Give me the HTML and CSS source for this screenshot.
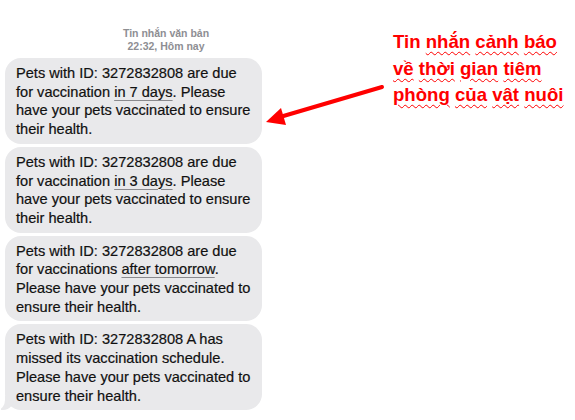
FILE: index.html
```html
<!DOCTYPE html>
<html lang="vi">
<head>
<meta charset="utf-8">
<link rel="stylesheet" href="styles.css">
</head>
<body>
<div class="page">
  <div class="chat">
    <div class="meta">
      <div>Tin nhắn văn bản</div>
      <div>22:32, Hôm nay</div>
    </div>
    <div class="bubble">Pets with ID: 3272832808 are due<br>for vaccination <span class="u">in 7 days</span>. Please<br>have your pets vaccinated to ensure<br>their health.</div>
    <div class="bubble">Pets with ID: 3272832808 are due<br>for vaccination <span class="u">in 3 days</span>. Please<br>have your pets vaccinated to ensure<br>their health.</div>
    <div class="bubble">Pets with ID: 3272832808 are due<br>for vaccinations <span class="u">after tomorrow</span>.<br>Please have your pets vaccinated to<br>ensure their health.</div>
    <div class="bubble last">Pets with ID: 3272832808 A has<br>missed its vaccination schedule.<br>Please have your pets vaccinated to<br>ensure their health.<span class="tail"></span></div>
  </div>
  <div class="note">
    <div>Tin <span class="w">nhắn</span> <span class="w">cảnh</span> <span class="w">báo</span></div>
    <div><span class="w">về</span> <span class="w">thời</span> <span class="w">gian</span> <span class="w">tiêm</span></div>
    <div><span class="w">phòng</span> <span class="w">của</span> <span class="w">vật</span> <span class="w">nuôi</span></div>
  </div>
  <svg class="arrow" width="575" height="420" viewBox="0 0 575 420">
    <line x1="382" y1="87" x2="280" y2="117" stroke="#ff0000" stroke-width="4" stroke-linecap="round"/>
    <polygon points="266,122 281,108 286,125" fill="#ff0000"/>
  </svg>
</div>
</body>
</html>
```
FILE: styles.css
```css
html, body {
  margin: 0;
  padding: 0;
  background: #ffffff;
}
.page {
  position: relative;
  width: 575px;
  height: 420px;
  display: flex;
  align-items: flex-start;
  font-family: "Liberation Sans", Arial, sans-serif;
}
.chat {
  display: flex;
  flex-direction: column;
  gap: 3px;
  padding: 27px 0 0 5px;
  width: 257px;
  flex: none;
}
.meta {
  margin-left: 56px;
  width: 210px;
  text-align: center;
  color: #8e8e93;
  font-size: 10.5px;
  font-weight: bold;
  line-height: 12.5px;
  margin-bottom: 3px;
}
.bubble {
  position: relative;
  background: #e9e9eb;
  border-radius: 16px;
  padding: 6px 0 5px 11px;
  color: #111111;
  font-size: 14.6px;
  line-height: 18.7px;
  white-space: nowrap;
  -webkit-text-stroke: 0.2px #111111;
}
.u {
  text-decoration: underline;
  text-decoration-color: #8a8a8e;
  text-decoration-thickness: 1px;
  text-underline-offset: 3px;
}
.tail {
  position: absolute;
  left: -4px;
  bottom: 0;
  width: 14px;
  height: 14px;
  background: #e9e9eb;
  border-bottom-right-radius: 12px 14px;
}
.tail::after {
  content: "";
  position: absolute;
  left: -6px;
  bottom: 0;
  width: 10px;
  height: 16px;
  background: #ffffff;
  border-bottom-right-radius: 8px 10px;
}
.note {
  margin: 29px 0 0 131px;
  color: #ff0000;
  font-size: 18.6px;
  font-weight: bold;
  line-height: 26.5px;
  white-space: nowrap;
}
.w {
  text-decoration: underline wavy #ff0000;
  text-decoration-thickness: 1px;
  text-underline-offset: 3px;
}
.arrow {
  position: absolute;
  left: 0;
  top: 0;
  pointer-events: none;
}
```
